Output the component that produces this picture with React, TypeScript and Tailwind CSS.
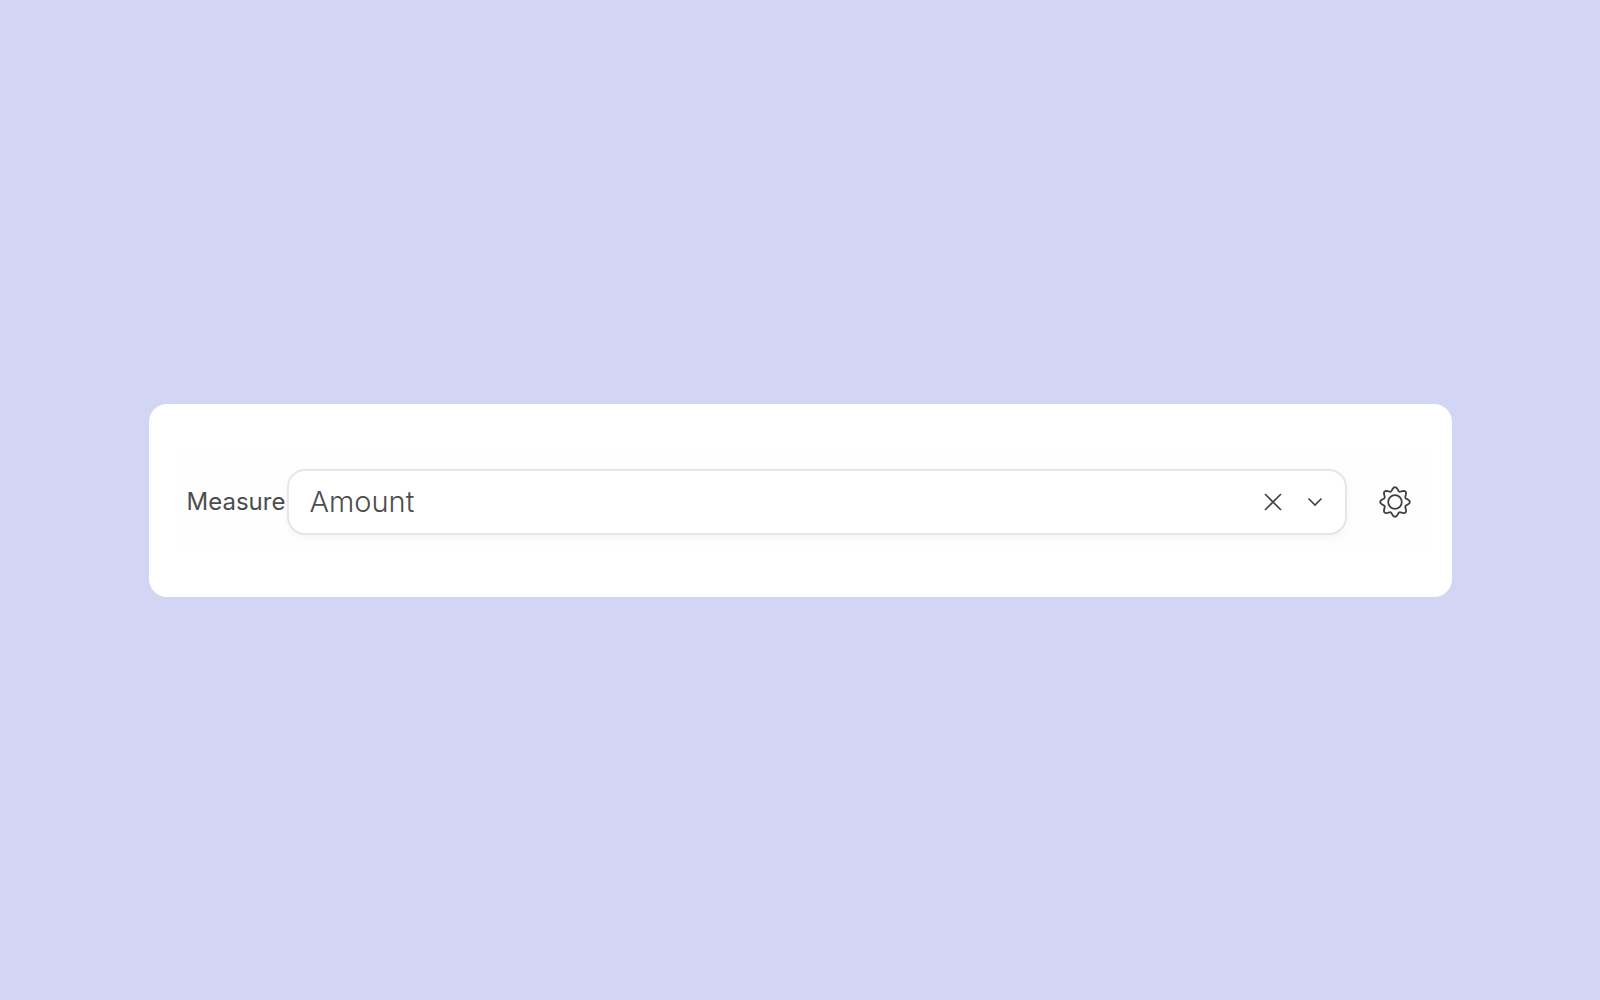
function gearPath() {
  // wavy eight-lobed outline, drawn in a 32x32 box
  const pts: string[] = [];
  for (let i = 0; i < 160; i++) {
    const a = (i / 160) * Math.PI * 2;
    const r = 13 + 1.8 * Math.cos(8 * a);
    pts.push(`${(16 + r * Math.sin(a)).toFixed(2)} ${(16 - r * Math.cos(a)).toFixed(2)}`);
  }
  return `M${pts.join("L")}Z`;
}

export default function App() {
  return (
    <div className="flex min-h-screen items-center justify-center bg-[#d2d5f3] font-['Inter',sans-serif]">
      <div className="flex h-[193px] w-[1303px] items-center rounded-[18px] bg-white px-[26px] pt-[3px]">
        <div className="flex h-[102px] flex-1 items-center bg-[#fefefe] pl-[12px]">
          <span className="w-[100px] text-[24px] leading-none text-[#4d4d4d]">Measure</span>
          <div className="flex h-[66px] w-[1060px] items-center rounded-[18px] border-2 border-[#e6e6e6] bg-white pl-[21px] pr-[22px] shadow-[0_3px_8px_rgba(0,0,0,0.04)]">
            <span className="flex-1 text-[29px] font-light leading-none text-[#4d4d4d]">Amount</span>
            <button type="button" aria-label="Clear" className="mr-[25px] text-[#404040]">
              <svg width="18" height="18" viewBox="0 0 18 18" fill="none" stroke="currentColor" strokeWidth="1.6" className="block">
                <path d="M1 1l16 16M17 1L1 17" />
              </svg>
            </button>
            <button type="button" aria-label="Open" className="text-[#404040]">
              <svg width="16" height="10" viewBox="0 0 16 10" fill="none" stroke="currentColor" strokeWidth="1.6" className="block">
                <path d="M1.5 1.5L8 8l6.5-6.5" />
              </svg>
            </button>
          </div>
          <button type="button" aria-label="Settings" className="ml-[32px] text-[#404040]">
            <svg width="32" height="32" viewBox="0 0 32 32" fill="none" stroke="currentColor" strokeWidth="1.8" className="block">
              <path d={gearPath()} />
              <circle cx="16" cy="16" r="6.8" />
            </svg>
          </button>
        </div>
      </div>
    </div>
  );
}
